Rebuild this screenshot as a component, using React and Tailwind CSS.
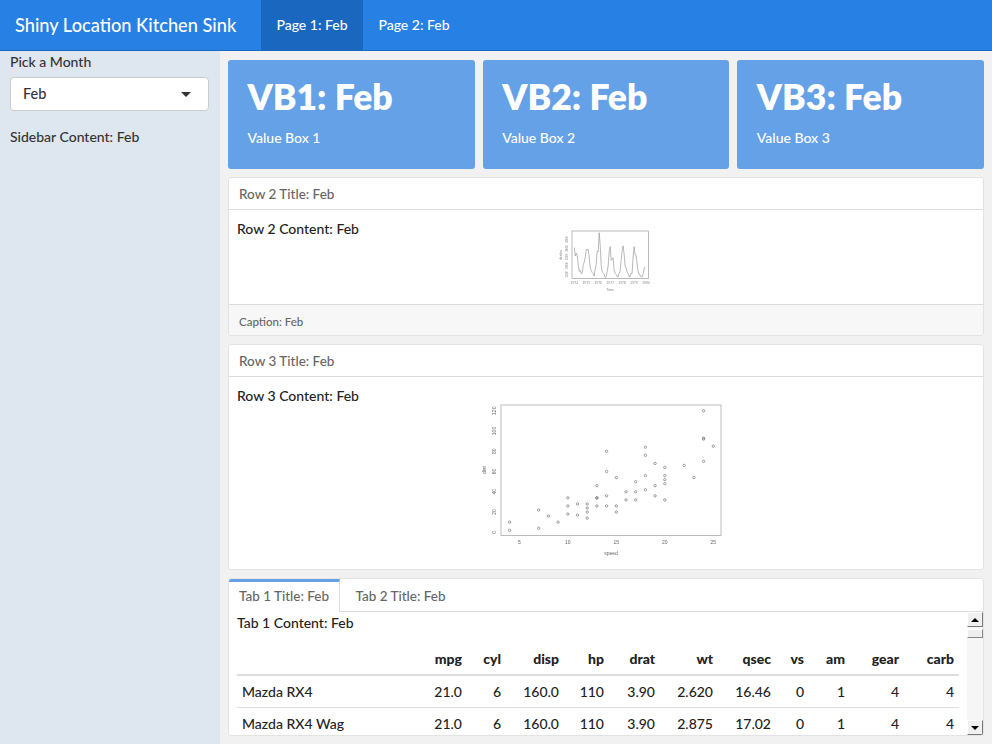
import React from 'react'

const speed = [4,4,7,7,8,9,10,10,10,11,11,12,12,12,12,13,13,13,13,14,14,14,14,15,15,15,16,16,17,17,17,18,18,18,18,19,19,19,20,20,20,20,20,22,23,24,24,24,24,25]
const dist = [2,10,4,22,16,10,18,26,34,17,28,14,20,24,28,26,34,34,46,26,36,60,80,20,26,54,32,40,32,40,50,42,56,76,84,36,46,68,32,48,52,56,64,66,54,70,92,93,120,85]
const deaths = [3035,2552,2704,2554,2014,1655,1721,1524,1596,2074,2199,2512,2933,2889,2938,2497,1870,1726,1607,1545,1396,1787,2076,2837,2787,3891,3179,2011,1636,1580,1489,1300,1356,1653,2013,2823,3102,2294,2385,2444,1748,1554,1498,1361,1346,1564,1640,2293,2815,3137,2679,1969,1870,1633,1529,1366,1357,1570,1535,2491,3084,2605,2573,2143,1693,1504,1461,1354,1333,1492,1781,1915]

const COLS = ['mpg', 'cyl', 'disp', 'hp', 'drat', 'wt', 'qsec', 'vs', 'am', 'gear', 'carb']
const WIDTHS = ['w-[190px]', 'w-[40px]', 'w-[39px]', 'w-[58px]', 'w-[45px]', 'w-[51px]', 'w-[58px]', 'w-[58px]', 'w-[33px]', 'w-[41px]', 'w-[54px]', 'w-[55px]']
const ROWS = [
  ['Mazda RX4', '21.0', '6', '160.0', '110', '3.90', '2.620', '16.46', '0', '1', '4', '4'],
  ['Mazda RX4 Wag', '21.0', '6', '160.0', '110', '3.90', '2.875', '17.02', '0', '1', '4', '4'],
]

function DeathsPlot() {
  // svg origin is 556,228 on the page
  const pts = deaths.map((d, i) => `${(18.3 + i * 0.996).toFixed(1)},${(4.7 + (3891 - d) * 0.01737).toFixed(1)}`).join(' ')
  const ticks = ['1974', '1975', '1976', '1977', '1978', '1979', '1980']
  const yTicks = ['3500', '3000', '2500', '2000', '1500']
  return (
    <svg width="100" height="68" className="block blur-[0.4px]" fill="#888">
      <rect x="16" y="3" width="76.5" height="47.5" fill="none" stroke="#aaa" strokeWidth="0.8" />
      <polyline points={pts} fill="none" stroke="#999" strokeWidth="0.7" />
      {ticks.map((t, i) => (
        <text key={t} x={18.3 + i * 11.95} y="56" fontSize="3.4" textAnchor="middle" fontFamily="Liberation Sans">{t}</text>
      ))}
      {yTicks.map((t, i) => (
        <text key={t} transform={`translate(11.5 ${11.5 + i * 8.7}) rotate(-90)`} fontSize="3" textAnchor="middle" fontFamily="Liberation Sans">{t}</text>
      ))}
      <text x="54" y="63" fontSize="3.4" textAnchor="middle" fontFamily="Liberation Sans">Time</text>
      <text transform="translate(6 27) rotate(-90)" fontSize="3.4" textAnchor="middle" fontFamily="Liberation Sans">deaths</text>
    </svg>
  )
}

function CarsPlot() {
  // svg origin is 470,400 on the page
  const x = s => 49.3 + (s - 5) * 9.7
  const y = d => 132.3 - d * 1.013
  return (
    <svg width="260" height="160" className="block blur-[0.4px]" fill="#666">
      <rect x="31" y="5" width="220" height="130.5" fill="none" stroke="#bbb" />
      {speed.map((s, i) => (
        <circle key={i} cx={x(s)} cy={y(dist[i])} r="1.2" fill="none" stroke="#777" strokeWidth="0.7" />
      ))}
      {[5, 10, 15, 20, 25].map(s => (
        <text key={s} x={x(s)} y="144" fontSize="5" textAnchor="middle" fontFamily="Liberation Sans">{s}</text>
      ))}
      {[0, 20, 40, 60, 80, 100, 120].map(d => (
        <text key={d} transform={`translate(26 ${y(d)}) rotate(-90)`} fontSize="5" textAnchor="middle" fontFamily="Liberation Sans">{d}</text>
      ))}
      <text x="141" y="155" fontSize="5" textAnchor="middle" fontFamily="Liberation Sans">speed</text>
      <text transform="translate(16 70) rotate(-90)" fontSize="5" textAnchor="middle" fontFamily="Liberation Sans">dist</text>
    </svg>
  )
}

function ScrollBar() {
  return (
    <div className="w-[16px] shrink-0 flex flex-col bg-[#f6f6f6] bg-[radial-gradient(#e2e2e2_0.5px,transparent_0.5px)] bg-[length:2px_2px]">
      <div className="h-[15px] bg-[#f0f0f0] border border-t-white border-l-white border-r-[#777] border-b-[#777] flex items-center justify-center">
        <div className="w-0 h-0 border-x-[4px] border-x-transparent border-b-[4px] border-b-black" />
      </div>
      <div className="h-[9px] mt-[2px] bg-[#eeeeee] border border-t-white border-l-white border-r-[#888] border-b-[#888]" />
      <div className="flex-1" />
      <div className="h-[15px] bg-[#f0f0f0] border border-t-white border-l-white border-r-[#777] border-b-[#777] flex items-center justify-center">
        <div className="w-0 h-0 border-x-[4px] border-x-transparent border-t-[4px] border-t-black" />
      </div>
    </div>
  )
}

function ValueBox({ n }) {
  return (
    <div className="flex-1 h-[109px] bg-[#64a1e6] rounded-[3px] text-white pl-[19.5px] pt-[12px]">
      <div className="text-[35.5px] leading-[50px] font-extrabold">VB{n}: Feb</div>
      <div className="text-[14px] leading-[20px] mt-[6px] font-medium">Value Box {n}</div>
    </div>
  )
}

function Card({ title, height, children }) {
  return (
    <div className={`${height} bg-white border border-[#e3e3e3] rounded-[3px] flex flex-col`}>
      <div className="h-[32px] shrink-0 border-b border-[#dcdcdc] px-[10px] pt-[2px] flex items-center text-[13.5px] font-medium text-[#666]">{title}</div>
      {children}
    </div>
  )
}

export default function App() {
  return (
    <div className="h-screen overflow-hidden flex flex-col font-['Lato','Liberation_Sans',sans-serif] text-[#222]">
      {/* Navbar */}
      <div className="h-[51px] shrink-0 bg-[#2780e3] border-b border-[#1967be] flex items-stretch text-white">
        <div className="pl-[15px] w-[261px] text-[18.2px] leading-[50px] font-medium">Shiny Location Kitchen Sink</div>
        <div className="w-[102px] bg-[#1967be] text-center text-[14px] leading-[50px] font-medium">Page 1: Feb</div>
        <div className="w-[102px] text-center text-[14px] leading-[50px] font-medium">Page 2: Feb</div>
      </div>

      <div className="flex-1 min-h-0 flex">
        {/* Sidebar */}
        <div className="w-[220px] shrink-0 bg-[#dee6f0] px-[10px] text-[#333] font-medium">
          <div className="text-[14px] leading-[20px] mt-[1px]">Pick a Month</div>
          <div className="h-[34px] mt-[5px] w-[199px] bg-white border border-[#cccccc] rounded-[4px] pl-[12px] pr-[17px] flex items-center justify-between text-[14.5px]">
            Feb
            <div className="w-0 h-0 border-x-[5px] border-x-transparent border-t-[5px] border-t-[#333]" />
          </div>
          <div className="text-[14px] leading-[20px] mt-[16px]">Sidebar Content: Feb</div>
        </div>

        {/* Main */}
        <div className="flex-1 min-w-0 bg-[#f1f1f1] pl-[8px] pr-[8px] pt-[9px] pb-[8px] flex flex-col gap-[8px]">
          <div className="flex gap-[8px]">
            <ValueBox n={1} />
            <ValueBox n={2} />
            <ValueBox n={3} />
          </div>

          <Card title="Row 2 Title: Feb" height="h-[159px]">
            <div className="flex-1 min-h-0 relative px-[8px] pt-[9px] text-[14px] leading-[20px] font-medium">
              Row 2 Content: Feb
              <div className="absolute left-[327px] top-[18px]"><DeathsPlot /></div>
            </div>
            <div className="h-[31px] shrink-0 bg-[#f7f7f7] border-t border-[#dcdcdc] rounded-b-[3px] px-[10px] pt-[3px] flex items-center text-[11.5px] font-medium text-[#666]">Caption: Feb</div>
          </Card>

          <Card title="Row 3 Title: Feb" height="h-[226px]">
            <div className="flex-1 min-h-0 relative px-[8px] pt-[9px] text-[14px] leading-[20px] font-medium">
              Row 3 Content: Feb
              <div className="absolute left-[241px] top-[23px]"><CarsPlot /></div>
            </div>
          </Card>

          {/* Tabset */}
          <div className="flex-1 min-h-0 bg-white border border-[#e3e3e3] rounded-[3px] flex flex-col overflow-hidden">
            <div className="h-[33px] shrink-0 flex border-b border-[#dcdcdc] text-[13.5px] font-medium text-[#666]">
              <div className="w-[111px] h-[33px] bg-white border-t-[3px] border-t-[#64a1e6] border-r border-r-[#dcdcdc] flex items-center justify-center pb-[2px]">Tab 1 Title: Feb</div>
              <div className="w-[121px] flex items-center justify-center pt-[2px]">Tab 2 Title: Feb</div>
            </div>
            <div className="flex-1 min-h-0 flex">
              <div className="flex-1 min-w-0 overflow-hidden px-[8px]">
                <div className="text-[14px] leading-[20px] mt-[1px] font-medium">Tab 1 Content: Feb</div>
                <table className="table-fixed w-[722px] mt-[10px] text-[14px] font-medium">
                  <colgroup>
                    {WIDTHS.map((w, i) => <col key={i} className={w} />)}
                  </colgroup>
                  <thead>
                    <tr className="border-b-2 border-[#dddddd]">
                      <th className="h-[32px]" />
                      {COLS.map(c => <th key={c} className="px-[5px] text-right font-black h-[32px]">{c}</th>)}
                    </tr>
                  </thead>
                  <tbody>
                    {ROWS.map(r => (
                      <tr key={r[0]} className="border-b border-[#dddddd]">
                        {r.map((v, i) => (
                          <td key={i} className={`px-[5px] h-[32px] whitespace-nowrap ${i === 0 ? 'text-left' : 'text-right'}`}>{v}</td>
                        ))}
                      </tr>
                    ))}
                  </tbody>
                </table>
              </div>
              <ScrollBar />
            </div>
          </div>
        </div>
      </div>
    </div>
  )
}
